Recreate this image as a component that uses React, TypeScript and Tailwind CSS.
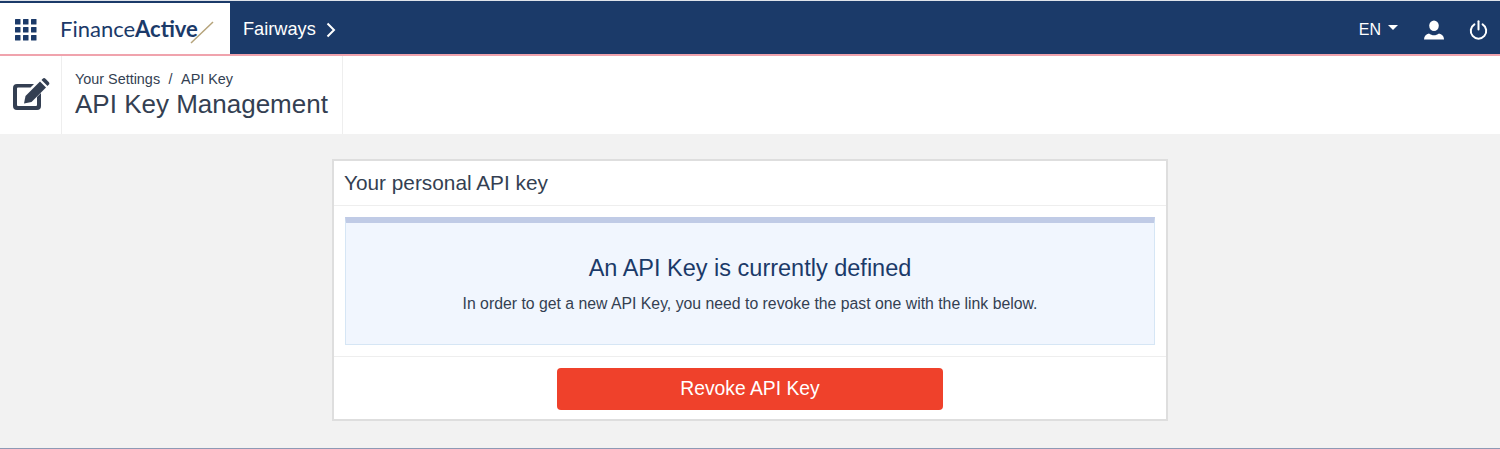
import { FC } from "react";

const font = "font-['Liberation_Sans',Arial,sans-serif]";

const GridIcon: FC = () => (
  <svg width="22" height="22" viewBox="0 0 22 22" fill="#1b3a69">
    {[0, 8, 16].map((y) =>
      [0, 8, 16].map((x) => <rect key={`${x}-${y}`} x={x} y={y} width="5.500" height="5.500" rx="0.500" />),
    )}
  </svg>
);

const EditIcon: FC = () => (
  <svg width="37" height="34" viewBox="0 0 37 34" fill="#343f52">
    <path d="M4 6h17l-3.500 3.500H5a1 1 0 0 0-1 1V27a1 1 0 0 0 1 1h18a1 1 0 0 0 1-1v-8l4-4v13a4 4 0 0 1-4 4H4a4 4 0 0 1-4-4V10a4 4 0 0 1 4-4z" />
    <path d="M27 3.500l6 6L18.500 24l-7.500 1.500 1.500-7.500z" />
    <path d="M28.500 2l1.200-1.200a2 2 0 0 1 2.800 0l3.200 3.200a2 2 0 0 1 0 2.800L34.500 8z" />
  </svg>
);

const PowerIcon: FC = () => (
  <svg width="19" height="20" viewBox="0 0 20 22" fill="none" stroke="#fff" strokeWidth="2.200" strokeLinecap="round">
    <path d="M10 1.500v9" />
    <path d="M5.500 4.800a8.500 8.500 0 1 0 9 0" />
  </svg>
);

const UserIcon: FC = () => (
  <svg width="20" height="20" viewBox="0 0 20 20" fill="#fff">
    <ellipse cx="10" cy="5.800" rx="4.800" ry="5.300" />
    <path d="M0 19.500c0-3.500 2-5 5-6 1.500 1.200 3.200 1.800 5 1.800s3.500-.6 5-1.800c3 1 5 2.500 5 6z" />
  </svg>
);

export default function App() {
  return (
    <div className={`${font} h-[449px] w-[1500px] overflow-hidden bg-[#f2f2f2] flex flex-col`}>
      <div className="h-px bg-[#dfe3ea]"></div>
      <div className="h-[2px] bg-[#1b3a69]"></div>
      <header className="h-[51px] flex bg-[#1b3a69]">
        <div className="w-[230px] bg-white flex items-center">
          <div className="ml-[15px] flex pt-[2px]">
            <GridIcon />
          </div>
          <div className="ml-[23px] relative flex items-center font-['Lato',sans-serif] text-[#1b3a69] text-[22px] pb-[1px]">
            <span className="font-normal">Finance</span>
            <span className="font-bold">Active</span>
            <svg className="absolute left-[130px] top-[9px]" width="24" height="24" viewBox="0 0 24 24">
              <path d="M1 22L23 1" stroke="#b5a37a" strokeWidth="1.500" />
            </svg>
          </div>
        </div>
        <div className="flex items-center pl-[13px] pt-[3px] text-white text-[18.200px]">
          <span>Fairways</span>
          <svg className="ml-[10px]" width="10" height="16" viewBox="0 0 10 16" fill="none" stroke="#fff" strokeWidth="2">
            <path d="M1.500 1.500L8 8l-6.500 6.500" />
          </svg>
        </div>
        <div className="ml-auto flex items-center pt-[2px] text-white">
          <span className="text-[16px]">EN</span>
          <span className="ml-[7px] mb-[4px] w-0 h-0 border-x-[5px] border-x-transparent border-t-[5px] border-t-white"></span>
          <div className="ml-[26px] flex">
            <UserIcon />
          </div>
          <div className="ml-[25px] mr-[12px] flex">
            <PowerIcon />
          </div>
        </div>
      </header>
      <div className="h-[2px] bg-[#f0a3ad]"></div>
      <div className="h-[78px] bg-white flex shrink-0">
        <div className="w-[62px] border-r border-[#eeeeee] flex items-center justify-center pl-[1px] pb-[1px]">
          <EditIcon />
        </div>
        <div className="w-[281px] border-r border-[#eeeeee] pl-[13px] pt-[15px] text-[#343f52]">
          <div className="flex text-[14.400px] leading-[17px]">
            <span>Your Settings</span>
            <span className="mx-[8.500px]">/</span>
            <span>API Key</span>
          </div>
          <div className="text-[26px] leading-[30px] mt-[1px]">API Key Management</div>
        </div>
      </div>
      <main className="flex-1 flex flex-col items-center pt-[25px]">
        <section className="w-[836px] h-[262px] bg-white border-2 border-[#dedede] flex flex-col">
          <div className="h-[45px] border-b border-[#eeeeee] pl-[10px] flex items-center text-[20.800px] text-[#343f52]">
            Your personal API key
          </div>
          <div className="px-[11px] pt-[11px] pb-[11px] border-b border-[#eeeeee]">
            <div className="h-[128px] bg-[#f1f6fe] border border-[#d6e6f5] border-t-[6px] border-t-[#c0cbe6] flex flex-col items-center">
              <h2 className="mt-[30px] text-[23.500px] leading-[30px] text-[#1b3a69]">An API Key is currently defined</h2>
              <p className="mt-[12px] text-[15.800px] leading-[18px] text-[#343f52]">
                In order to get a new API Key, you need to revoke the past one with the link below.
              </p>
            </div>
          </div>
          <div className="flex-1 flex justify-center pt-[11px]">
            <button className="w-[386px] h-[42px] rounded-[4px] bg-[#ef412b] text-white text-[19.300px]">Revoke API Key</button>
          </div>
        </section>
      </main>
      <div className="h-px bg-[#8f9ab5]"></div>
    </div>
  );
}
